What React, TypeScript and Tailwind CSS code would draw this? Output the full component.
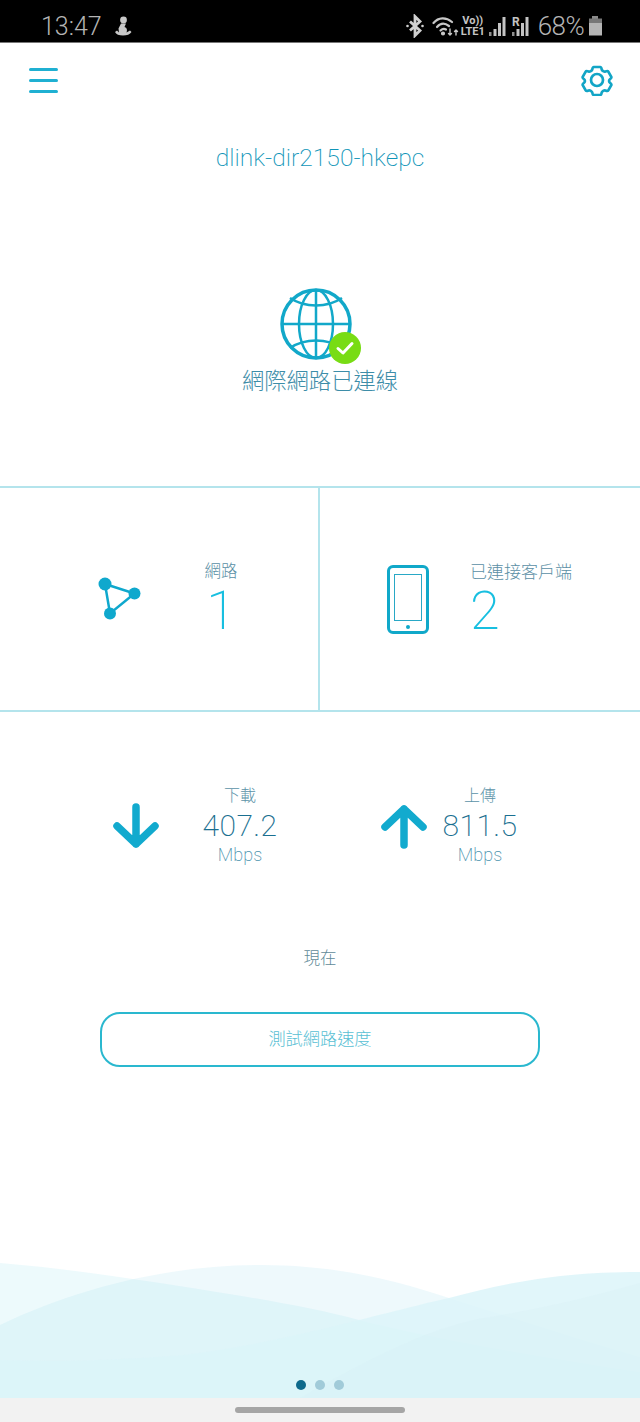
import React from "react";

const cjk = "font-['Roboto','Noto_Sans_CJK_TC',sans-serif] font-light";

function SignalBars({ label }: { label?: string }) {
  return (
    <svg width="17" height="24" viewBox="0 0 17 24" fill="#c4c4c4">
      <rect x="0" y="18" width="2.500" height="4" fill="#8f8f8f" />
      <rect x="4.500" y="15" width="3" height="7" />
      <rect x="9" y="9" width="3" height="13" />
      <rect x="13.500" y="3" width="3" height="19" />
      {label && (
        <text x="0" y="12" fontSize="12" fontWeight="700" fontFamily="Roboto, sans-serif">
          {label}
        </text>
      )}
    </svg>
  );
}

function StatusBar() {
  return (
    <div className="flex h-[43px] shrink-0 items-center justify-between border-b border-[#777] bg-black pl-[41px] pr-[38px] pt-[10px] font-['Roboto',sans-serif] text-[#b4b4b4]">
      <div className="flex items-center gap-[12px]">
        <span className="text-[25px] font-light leading-none">13:47</span>
        <svg width="18" height="20" viewBox="0 0 18 20" fill="#c8c8c8">
          <circle cx="9.500" cy="4" r="3.400" />
          <path d="M7 7.500h5l-1.500 3.500c2.500.6 3 3 2 5.500L16 14.500l1.500 1.500C16 18.500 13 19.500 9 19.500c-4 0-7-1-8-3.500L3 14.500 5 16.500 4.500 12.500z" />
        </svg>
      </div>
      <div className="flex items-center">
        <svg width="18" height="24" viewBox="0 0 18 24" fill="none" stroke="#d0d0d0" strokeWidth="2.800" className="mr-[8px]">
          <path d="M4 7.500l10 9-5 5V2.500l5 5-10 9" />
          <circle cx="1.500" cy="12" r="1.300" fill="#d0d0d0" stroke="none" />
          <circle cx="16.500" cy="12" r="1.300" fill="#d0d0d0" stroke="none" />
        </svg>
        <svg width="27" height="24" viewBox="0 0 27 24" fill="none" stroke="#c8c8c8" strokeWidth="2.200" strokeLinecap="round">
          <path d="M1.500 9C6.500 3 14 3 20 8" />
          <path d="M5 13C8.500 9 13 9 17 12" />
          <path d="M8.500 16.500c2-2 4-2 5.500-1" />
          <circle cx="11" cy="19.500" r="1" fill="#c8c8c8" />
          <path d="M18 15v6M16.500 19.500l1.500 1.500 1.500-1.500M24 21v-5M22.500 17.500l1.500-1.500 1.500 1.500" strokeWidth="1.400" />
        </svg>
        <div className="ml-[2px] mr-[4px] flex w-[24px] flex-col items-center text-[11px] font-bold leading-[11px] text-[#c4c4c4]">
          <span>Vo))</span>
          <span>LTE1</span>
        </div>
        <SignalBars />
        <span className="w-[6px]" />
        <SignalBars label="R" />
        <span className="ml-[9px] text-[26px] font-light leading-none tracking-[-0.6px]">68%</span>
        <svg width="14" height="24" viewBox="0 0 14 24" className="ml-[4px]">
          <rect x="4" y="2" width="6" height="3" fill="#8a8a8a" />
          <rect x="1" y="4.500" width="13" height="4" fill="#777" />
          <rect x="1" y="8.500" width="13" height="13" fill="#b5b5b5" />
        </svg>
      </div>
    </div>
  );
}

function Globe() {
  return (
    <div className="relative h-[72px] w-[72px]">
      <svg width="72" height="72" viewBox="0 0 72 72" fill="none" stroke="#12a8c9">
        <circle cx="36" cy="36" r="34" strokeWidth="3.500" />
        <ellipse cx="36" cy="36" rx="17" ry="34" strokeWidth="2.500" />
        <path d="M36 2v68M2 36h68" strokeWidth="2.500" />
        <path d="M10 10c15 10 37 10 52 0M10 60c15-10 37-10 52 0" strokeWidth="2.500" />
      </svg>
      <div className="absolute left-[49px] top-[44px] flex h-[32px] w-[32px] items-center justify-center rounded-full bg-[#78dc14]">
        <svg width="20" height="16" viewBox="0 0 20 16" fill="none" stroke="#fff" strokeWidth="3" strokeLinecap="round" strokeLinejoin="round">
          <path d="M3 8.500l5 4.500 9-9.500" />
        </svg>
      </div>
    </div>
  );
}

function ArrowIcon({ up }: { up?: boolean }) {
  return (
    <svg width="46" height="46" viewBox="0 0 46 46" fill="none" stroke="#12aace" strokeWidth="7.500" strokeLinecap="round" strokeLinejoin="round">
      {up ? <path d="M23 42V6M4 24L23 6l19 18" /> : <path d="M23 4v37M4 23l19 18 19-18" />}
    </svg>
  );
}

function Speed({ label, value, up }: { label: string; value: string; up?: boolean }) {
  return (
    <div className="flex w-[320px] items-start">
      <div className={up ? "ml-[61px] mt-[19px]" : "ml-[113px] mt-[19px]"}>
        <ArrowIcon up={up} />
      </div>
      <div className={`flex w-[100px] flex-col items-center ${up ? "ml-[3px]" : "ml-[31px]"}`}>
        <span className={`${cjk} text-[16px] leading-[24px] text-[#5b93a8]`}>{label}</span>
        <span className="font-['Roboto',sans-serif] text-[30px] font-extralight leading-[36px] tracking-[0.4px] text-[#1a6f90]">{value}</span>
        <span className="-mt-[1px] font-['Roboto',sans-serif] text-[18px] font-extralight leading-[24px] text-[#4a92ad]">Mbps</span>
      </div>
    </div>
  );
}

export default function App() {
  return (
    <div className="relative flex h-[1422px] w-[640px] flex-col overflow-hidden bg-white">
      <StatusBar />

      <header className="relative z-10 flex h-[76px] shrink-0 items-start justify-between pl-[29px] pr-[27px] pt-[22px]">
        <div className="mt-[3px] flex w-[29px] flex-col gap-[8px]">
          <span className="h-[3px] rounded-full bg-[#1fb0d2]" />
          <span className="h-[3px] rounded-full bg-[#1fb0d2]" />
          <span className="h-[3px] rounded-full bg-[#1fb0d2]" />
        </div>
        <svg width="32" height="32" viewBox="0 0 32 32" fill="none" stroke="#12a5c6" strokeWidth="2.700" strokeLinejoin="round" className="-mt-[1px]">
          <circle cx="16" cy="16" r="6" />
          <path d="M12.800 3h6.400c1 0 1.300 1 1.500 2.400.3 1.400 2.400 2.600 3.700 2.100 1.300-.5 2.400-.8 2.900.1l3 5.200c.5.9-.3 1.600-1.400 2.500-1.100.9-1.100 2.500 0 3.400 1.100.9 1.900 1.600 1.400 2.500l-3 5.200c-.5.9-1.600.6-2.900.1-1.300-.5-3.400.7-3.700 2.100-.2 1.400-.5 2.400-1.500 2.400h-6.400c-1 0-1.300-1-1.500-2.400-.3-1.400-2.400-2.600-3.700-2.100-1.300.5-2.400.8-2.900-.1l-3-5.200c-.5-.9.300-1.600 1.400-2.500 1.100-.9 1.100-2.500 0-3.400-1.100-.9-1.900-1.600-1.400-2.500l3-5.200c.5-.9 1.600-.6 2.900-.1 1.300.5 3.400-.7 3.700-2.100.2-1.400.5-2.400 1.500-2.400z" />
        </svg>
      </header>

      <h1 className="shrink-0 text-center font-['Roboto',sans-serif] text-[24.600px] font-extralight leading-[78px] text-[#0f95b8]">
        dlink-dir2150-hkepc
      </h1>

      <section className="flex h-[289px] shrink-0 flex-col items-center pt-[91px]">
        <div className="-ml-[8px]">
          <Globe />
        </div>
        <p className={`${cjk} mt-[3px] text-[22.300px] leading-[36px] text-[#3d8da8]`}>網際網路已連線</p>
      </section>

      <section className="grid h-[226px] shrink-0 grid-cols-2 border-y-2 border-[#b4e4ec]">
        <div className="flex items-center border-r-2 border-[#b4e4ec]">
          <svg width="44" height="44" viewBox="0 0 44 44" fill="#0fa8cd" stroke="#0fa8cd" className="ml-[98px]">
            <path d="M7 7l29.500 9.500L12 36.500z" fill="none" strokeWidth="2.500" />
            <circle cx="7" cy="7" r="6.500" stroke="none" />
            <circle cx="36.500" cy="16.500" r="6" stroke="none" />
            <circle cx="12" cy="36.500" r="6" stroke="none" />
          </svg>
          <div className="ml-[61px] flex w-[36px] flex-col items-center pb-[3px]">
            <span className={`${cjk} text-[16.500px] leading-[24px] text-[#5a8fa5]`}>網路</span>
            <span className="mt-[3px] font-['Roboto',sans-serif] text-[54px] font-extralight leading-[48px] text-[#18bfe0]">1</span>
          </div>
        </div>
        <div className="flex items-center">
          <div className="ml-[67px] flex h-[69px] w-[42px] flex-col items-center rounded-[6px] border-[3px] border-[#10a8c9] px-[4px] pt-[6px]">
            <span className="h-[47px] w-full border border-[#29a8c6]" />
            <span className="mt-[4px] h-[4px] w-[4px] rounded-full bg-[#10a8c9]" />
          </div>
          <div className="ml-[42px] flex flex-col items-start pb-[3px]">
            <span className={`${cjk} -ml-[1px] text-[17px] leading-[24px] text-[#5a8fa5]`}>已連接客戶端</span>
            <span className="-ml-[1px] mt-[3px] font-['Roboto',sans-serif] text-[54px] font-extralight leading-[48px] text-[#18bfe0]">2</span>
          </div>
        </div>
      </section>

      <section className="flex shrink-0 pt-[72px]">
        <Speed label="下載" value="407.2" />
        <Speed label="上傳" value="811.5" up />
      </section>

      <p className={`${cjk} mt-[80px] shrink-0 text-center text-[16.500px] leading-[24px] text-[#5f8a98]`}>現在</p>

      <button className={`${cjk} mx-auto mt-[41px] h-[55px] w-[440px] shrink-0 rounded-[20px] border-2 border-[#2ab8cf] bg-white pt-[1px] text-[17.200px] text-[#58c0d4]`}>
        測試網路速度
      </button>

      <div className="relative mt-auto h-[160px] shrink-0">
        <svg width="640" height="136" viewBox="0 0 640 136" className="absolute left-0 top-0">
          <path d="M0 1C50 5 100 12 139 18 200 27 300 42 359 58 430 76 540 95 640 110V136H0z" fill="#bfeef3" fillOpacity="0.28" />
          <path d="M0 63C80 25 170 3 261 3 340 3 400 20 449 36 520 58 580 78 640 95V136H0z" fill="#a8e0ee" fillOpacity="0.2" />
          <path d="M0 98C60 100 120 98 184 93 250 85 310 70 359 58 400 48 430 40 449 36 510 20 560 10 640 10V136H0z" fill="#dcf4f9" fillOpacity="0.85" />
          <path d="M300 136C380 90 440 62 490 55 540 47 590 35 640 21V136z" fill="#d6f0f6" fillOpacity="0.3" />
        </svg>
        <div className="absolute left-0 top-[118px] flex w-full justify-center gap-[9px]">
          <span className="h-[10px] w-[10px] rounded-full bg-[#0e6a8c]" />
          <span className="h-[10px] w-[10px] rounded-full bg-[#a1cbd9]" />
          <span className="h-[10px] w-[10px] rounded-full bg-[#a1cbd9]" />
        </div>
        <nav className="absolute bottom-0 left-0 flex h-[24px] w-full items-center justify-center bg-[#f2f2f2]">
          <span className="h-[6px] w-[170px] rounded-full bg-[#a5a5a5]" />
        </nav>
      </div>
    </div>
  );
}
